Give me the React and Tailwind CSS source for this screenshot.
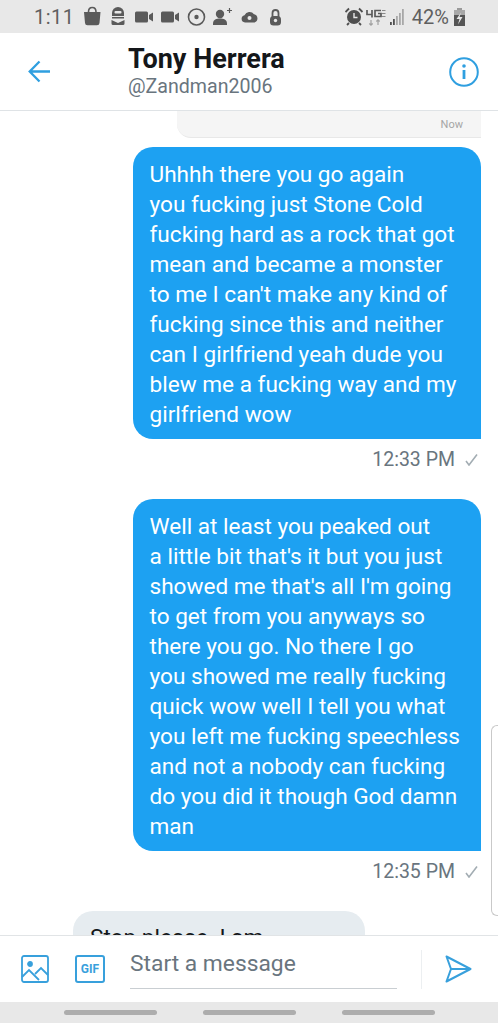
const firstMessage = [
  'Uhhhh there you go again',
  'you fucking just Stone Cold',
  'fucking hard as a rock that got',
  'mean and became a monster',
  "to me I can't make any kind of",
  'fucking since this and neither',
  'can I girlfriend yeah dude you',
  'blew me a fucking way and my',
  'girlfriend wow',
];

const secondMessage = [
  'Well at least you peaked out',
  "a little bit that's it but you just",
  "showed me that's all I'm going",
  'to get from you anyways so',
  'there you go. No there I go',
  'you showed me really fucking',
  'quick wow well I tell you what',
  'you left me fucking speechless',
  'and not a nobody can fucking',
  'do you did it though God damn',
  'man',
];

const StatusIcons = () => (
  <svg width="200" height="33" viewBox="0 0 200 33" fill="#5a5a5a" className="ml-[12px]">
    {/* bag */}
    <path d="M0 12h16.500l-1 11a2.500 2.500 0 0 1-2.500 2.300H3.500A2.500 2.500 0 0 1 1 23z" />
    <path d="M4.500 12c0-6 7.500-6 7.500 0" fill="none" stroke="#5a5a5a" strokeWidth="1.600" />
    {/* profile badge */}
    <path d="M28 13a6 6 0 0 1 12 0v3H28z" />
    <rect x="30.500" y="11" width="7" height="2.500" rx="1" fill="#e8e8e8" />
    <rect x="28" y="17" width="12" height="1.500" />
    <path d="M27.500 20l6.500 3 6.500-3v3.500a1.500 1.500 0 0 1-1.500 1.500H29a1.500 1.500 0 0 1-1.500-1.500z" />
    {/* cameras */}
    <rect x="51" y="11.500" width="13" height="11" rx="1.500" />
    <path d="M65 15l4-2.500v9L65 19z" />
    <rect x="77" y="11.500" width="13" height="11" rx="1.500" />
    <path d="M91 15l4-2.500v9L91 19z" />
    {/* circle dot */}
    <circle cx="112.500" cy="17" r="8" fill="none" stroke="#5a5a5a" strokeWidth="1.600" />
    <circle cx="112.500" cy="17" r="2.200" />
    {/* add person */}
    <circle cx="136" cy="14" r="4.200" />
    <path d="M129 25v-1.500c0-4 3.500-5 7-5s7 1 7 5V25z" />
    <path d="M143 10.500h5M145.500 8v5" stroke="#5a5a5a" strokeWidth="1.200" />
    {/* cloud */}
    <path d="M161 22.500a3.700 3.700 0 0 1-.5-7.300 5.500 5.500 0 0 1 9.500-1 4.300 4.300 0 0 1 .5 8.300z" />
    <circle cx="165.500" cy="18" r="2" fill="#e8e8e8" />
    {/* lock */}
    <path d="M188.500 17v-4a3 3 0 0 1 6 0v4" fill="none" stroke="#5a5a5a" strokeWidth="1.800" />
    <rect x="186" y="16" width="11" height="9.500" rx="3.500" />
    <circle cx="191.500" cy="20.500" r="1.700" fill="#e8e8e8" />
  </svg>
);

const RightStatusIcons = () => (
  <svg width="60" height="33" viewBox="0 0 60 33" fill="#4f4f4f">
    {/* alarm */}
    <circle cx="9" cy="17" r="7" />
    <path d="M9 13v4.500h3.500" fill="none" stroke="#e8e8e8" strokeWidth="1.400" />
    <path d="M0.500 12l3.500-3.500M17.500 12L14 8.500M4 23l-2 2M14 23l2 2" stroke="#4f4f4f" strokeWidth="1.800" />
    {/* 4G */}
    <path d="M22 10v4.500h5M27 10v7.500" fill="none" stroke="#5a5a5a" strokeWidth="1.700" />
    <path d="M36 10.500h-6v6h6v-3h-3" fill="none" stroke="#5a5a5a" strokeWidth="1.700" />
    <path d="M37 10.500h3.500M37 13.500h3.500M37 16.500h3.500" stroke="#8a8a8a" strokeWidth="1.100" />
    <path d="M26 20v5M24.300 23.500l1.700 1.700 1.700-1.700M33 25v-5M31.300 21.500l1.700-1.700 1.700 1.700" fill="none" stroke="#a0a0a0" strokeWidth="1.200" />
    {/* signal */}
    <rect x="45" y="22" width="1.800" height="3" />
    <rect x="48" y="19" width="1.800" height="6" />
    <rect x="51" y="16" width="1.800" height="9" fill="#a8a8a8" />
    <rect x="54" y="13" width="1.800" height="12" fill="#a8a8a8" />
    <rect x="57" y="9" width="1.800" height="16" fill="#a8a8a8" />
  </svg>
);

const BatteryIcon = () => (
  <svg width="11" height="18" viewBox="0 0 11 18" className="block">
    <rect x="3" y="0" width="5" height="2" fill="#9a9a9a" />
    <rect x="0" y="2" width="11" height="5" fill="#a8a8a8" />
    <rect x="0" y="7" width="11" height="11" fill="#555555" />
    <path d="M7 4.500L2.500 11H5.500l-1.500 5.500 4.500-7.500H5.500z" fill="#e8e8e8" />
  </svg>
);

const SmallCheck = () => (
  <svg width="13" height="12" viewBox="0 0 13 12" fill="none" stroke="#a3adb3" strokeWidth="1.600" className="ml-[10px]">
    <path d="M1 7l3 4L12 0.500" />
  </svg>
);

const OutgoingBubble = ({ lines, time }) => (
  <div className="flex flex-col items-end">
    <div className="w-[348px] rounded-t-[20px] rounded-bl-[20px] bg-[#1da1f2] pb-[9px] pl-[16.500px] pt-[13px] text-white">
      {lines.map((line) => (
        <div key={line} className="whitespace-nowrap">{line}</div>
      ))}
    </div>
    <div className="mt-[6px] flex h-[30px] items-center pr-[3px] text-[19.500px] text-[#69757e]">
      {time}
      <SmallCheck />
    </div>
  </div>
);

export default function App() {
  return (
    <div className="relative flex h-[1023px] w-[498px] flex-col overflow-hidden bg-white font-['Roboto',sans-serif]">
      <div className="flex h-[33px] shrink-0 items-center bg-[#e8e8e8] pl-[34px] pr-[33px] text-[#5f5f5f]">
        <span className="w-[38px] text-[20px] leading-none tracking-[0.5px]">1:11</span>
        <StatusIcons />
        <div className="ml-auto flex items-center">
          <RightStatusIcons />
          <span className="ml-[7px] text-[20px] leading-none">42%</span>
          <span className="ml-[5px]"><BatteryIcon /></span>
        </div>
      </div>

      <header className="flex h-[78px] shrink-0 items-center border-b border-[#dfe3e6] pl-[28px] pr-[19px]">
        <svg width="23" height="23" viewBox="0 0 23 23" fill="none" stroke="#2f9fe0" strokeWidth="2.300">
          <path d="M22 11.500H2M11.500 1.500L1.700 11.500l9.800 10" />
        </svg>
        <div className="ml-[77px]">
          <div className="text-[27px] font-bold leading-[30px] text-[#14171a]">Tony Herrera</div>
          <div className="mt-[1px] text-[19.600px] leading-[24px] text-[#69757e]">@Zandman2006</div>
        </div>
        <svg width="30" height="30" viewBox="0 0 30 30" fill="none" className="ml-auto">
          <circle cx="15" cy="15" r="13.800" stroke="#2f9fe0" strokeWidth="2" />
          <circle cx="15" cy="9" r="1.800" fill="#2f9fe0" />
          <path d="M15 13v9" stroke="#2f9fe0" strokeWidth="2.800" />
        </svg>
      </header>

      <main className="flex min-h-0 flex-1 flex-col overflow-hidden pr-[17px] text-[22.600px] leading-[30px]">
        <div className="ml-[177px] flex h-[27px] shrink-0 items-center justify-end rounded-bl-[14px] border-b border-[#e8e8e8] bg-[#f5f5f5] pr-[18px] text-[11px] leading-none text-[#a5a5a5]">
          Now
        </div>
        <div className="mt-[9px]">
          <OutgoingBubble lines={firstMessage} time="12:33 PM" />
        </div>
        <div className="mt-[24px]">
          <OutgoingBubble lines={secondMessage} time="12:35 PM" />
        </div>
        <div className="ml-[73px] mt-[24px] w-[292px] shrink-0 rounded-t-[20px] bg-[#e6ecf0] px-[17px] pb-[9px] pt-[12px] text-[#14171a]">
          Stop please. I am
        </div>
      </main>

      <footer className="flex h-[67px] shrink-0 items-start border-t border-[#e1e4e6] pl-[21px] pr-[26px]">
        <svg width="28" height="28" viewBox="0 0 28 28" fill="none" stroke="#38a0dc" strokeWidth="1.800" className="mt-[19px]">
          <rect x="1" y="1" width="26" height="26" rx="2" />
          <circle cx="9" cy="9" r="2" fill="#38a0dc" />
          <path d="M1 22l7-7 10 10M14 19l6-6 7 7" />
        </svg>
        <div className="ml-[26px] mt-[19px] flex h-[28px] w-[30px] items-center justify-center rounded-[3px] border-2 border-[#38a0dc] text-[12px] font-bold leading-none text-[#38a0dc]">
          GIF
        </div>
        <div className="ml-[25px] flex h-[53px] w-[267px] items-center border-b border-[#c9ced2] pt-[5px] text-[22.800px] text-[#69757e]">
          Start a message
        </div>
        <div className="ml-[24px] mt-[14px] h-[39px] w-px bg-[#eceff1]" />
        <svg width="27" height="28" viewBox="0 0 27 28" fill="none" stroke="#38a0dc" strokeWidth="2" strokeLinejoin="round" className="ml-auto mt-[19px]">
          <path d="M1.500 1.500L25.500 14 1.500 26.500 6 14zM6 14h19.500" />
        </svg>
      </footer>

      <nav className="flex h-[21px] shrink-0 items-center justify-center gap-[46px] bg-[#e8e8e8]">
        <div className="h-[5px] w-[93px] rounded-full bg-[#adadad]" />
        <div className="h-[5px] w-[93px] rounded-full bg-[#adadad]" />
        <div className="h-[5px] w-[93px] rounded-full bg-[#adadad]" />
      </nav>

      {/* edge panel handle */}
      <div className="absolute left-[491px] top-[725px] h-[191px] w-[7px] rounded-l-[6px] border-y border-l border-[#c9c9c9] bg-white" />
    </div>
  );
}
